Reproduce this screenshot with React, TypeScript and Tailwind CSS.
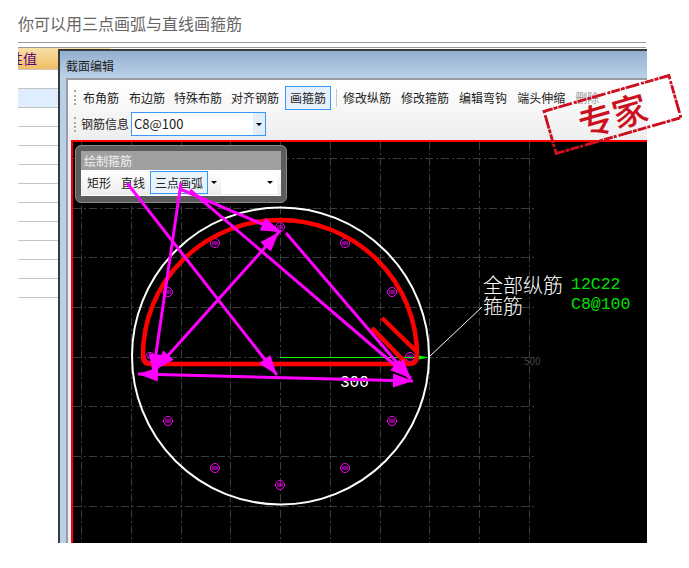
const GRID_X = [81, 131, 181, 230, 280, 330, 380, 429, 479, 529]
const GRID_Y = [158, 208, 257, 307, 357, 406, 456, 506]
const REBARS = [
  [280, 227], [215, 243], [345, 243], [168, 292], [392, 292], [150, 357],
  [410, 357], [168, 421], [392, 421], [215, 468], [345, 468], [280, 485],
]
const ROWS = Array.from({ length: 12 }, (_, i) => i)
const TOOLS = ["布角筋", "布边筋", "特殊布筋", "对齐钢筋"]
const TOOLS_RIGHT = ["修改纵筋", "修改箍筋", "编辑弯钩", "端头伸缩"]

function Arrow({ x1, y1, x2, y2, both }: { x1: number; y1: number; x2: number; y2: number; both?: boolean }) {
  const head = (fx: number, fy: number, tx: number, ty: number) => {
    const a = Math.atan2(ty - fy, tx - fx)
    const bx = tx - 20 * Math.cos(a)
    const by = ty - 20 * Math.sin(a)
    const nx = 7 * Math.sin(a)
    const ny = 7 * Math.cos(a)
    return `${tx},${ty} ${bx + nx},${by - ny} ${bx - nx},${by + ny}`
  }
  return (
    <g fill="#ff00ff">
      <line x1={x1} y1={y1} x2={x2} y2={y2} stroke="#ff00ff" strokeWidth="3" />
      <polygon points={head(x1, y1, x2, y2)} />
      {both && <polygon points={head(x2, y2, x1, y1)} />}
    </g>
  )
}

function Caret() {
  return <span className="block w-0 h-0 border-x-[3px] border-x-transparent border-t-[3px] border-t-black" />
}

function Grip() {
  return <span className="w-[2px] h-[15px] border-l-2 border-dotted border-[#a8a8a8]" />
}

function Drawing() {
  return (
    // viewBox is in page pixels, the canvas starts at x=73 y=142
    <svg className="block w-[574px] h-[401px]" viewBox="73 142 574 401">
      <g stroke="#3c3c3c" strokeWidth="1" strokeDasharray="8 3 2 3" shapeRendering="crispEdges">
        {GRID_X.map((x) => (
          <line key={x} x1={x + 0.5} y1="142" x2={x + 0.5} y2="543" />
        ))}
        {GRID_Y.map((y) => (
          <line key={y} x1="73" y1={y + 0.5} x2="537" y2={y + 0.5} />
        ))}
      </g>
      <circle cx="280.5" cy="356" r="148.5" fill="none" stroke="#fff" strokeWidth="2" />
      <g fill="none" stroke="#ff00ff" strokeWidth="1">
        {REBARS.map(([x, y]) => (
          <g key={`${x}-${y}`}>
            <circle cx={x} cy={y} r="4.5" />
            <line x1={x - 3} y1={y - 1} x2={x + 3} y2={y - 1} />
            <line x1={x - 3} y1={y + 1} x2={x + 3} y2={y + 1} />
          </g>
        ))}
      </g>
      <line x1="280" y1="357.5" x2="425" y2="357.5" stroke="#00ff00" strokeWidth="1" />
      <polygon points="429,357.5 416,355 416,360" fill="#00ff00" />
      <line x1="429" y1="357" x2="482" y2="307" stroke="#fff" strokeWidth="1" />
      <g fill="none" stroke="#ff0000" strokeWidth="4.5">
        <path d="M150 364 H409 Q417 364 417 355 A137 135 0 0 0 143 355 Q143 364 150 364 Z" />
        <line x1="382" y1="318" x2="416" y2="351" />
        <line x1="372" y1="328" x2="406" y2="363" />
      </g>
    </svg>
  )
}

// the annotation arrows were drawn on top of the whole screenshot, panel included
function Annotations() {
  return (
    <svg className="absolute left-0 top-0 w-[574px] h-[401px] pointer-events-none" viewBox="73 142 574 401">
      <Arrow x1={127} y1={183} x2={277} y2={375} />
      <Arrow x1={181} y1={183} x2={153} y2={374} />
      <Arrow x1={180} y1={189} x2={281} y2={232} />
      <Arrow x1={190} y1={190} x2={410} y2={378} />
      <Arrow x1={155} y1={370} x2={279} y2={232} both />
      <Arrow x1={286} y1={233} x2={411} y2={379} />
      <Arrow x1={138} y1={374} x2={413} y2={381} both />
    </svg>
  )
}

export default function App() {
  return (
    <div className="relative w-[689px] h-[568px] overflow-hidden bg-white font-['Noto_Sans_CJK_SC',sans-serif]">
      <h1 className="h-[42px] pl-[18px] pt-[11px] text-[16px] leading-[24px] font-normal text-[#666666]">
        你可以用三点画弧与直线画箍筋
      </h1>
      <div className="ml-[18px] w-[628px] h-[6px] border-y border-[#999aa0]" />

      <div className="flex pl-[18px]">
        {/* table behind the window */}
        <div className="w-[93px] shrink-0 overflow-hidden">
          <div className="h-[22px] bg-gradient-to-b from-[#f9dfa8] to-[#efbd62] border-b border-[#c9c9c9] text-[14px] leading-[21px] text-[#5c0a78] whitespace-nowrap -indent-[9px]">
            性值
          </div>
          {ROWS.map((r) => (
            <div key={r} className={`h-[19px] border-b border-[#c4c4c4] ${r === 1 ? "bg-[#dfeeff]" : "bg-white"}`} />
          ))}
        </div>

        {/* window */}
        <div className="relative -ml-[53px] mt-[1px] w-[589px] h-[494px] flex flex-col bg-[#b8cfe8] border-l-2 border-t-2 border-[#3a3a3a] text-[12px] text-[#222222]">
          <div className="h-[27px] pl-[6px] pt-[5px] leading-[20px] bg-gradient-to-b from-[#93afcf] to-[#bdd2ea]">截面编辑</div>
          <div className="flex-1 flex flex-col ml-[6px] min-h-0 border-l-2 border-t-2 border-[#9b9ca3] bg-[#f2f2f2]">
            <div className="pl-[3px] pt-[4px] h-[60px] shrink-0 bg-gradient-to-b from-white to-[#eeeeee]">
              <div className="flex items-center h-[27px] pl-[3px] gap-[10px] whitespace-nowrap">
                <Grip />
                {TOOLS.map((t, i) => (
                  <span key={t} className={i === 0 ? "-ml-[3px]" : i === 1 ? "-ml-[0px]" : "-ml-[1px]"}>{t}</span>
                ))}
                <span className="-ml-[4px] h-[24px] px-[4px] leading-[22px] border border-[#3399ff] bg-[#e6f1fb]">画箍筋</span>
                <span className="w-px h-[18px] bg-[#c8c8c8] -ml-[5px]" />
                {TOOLS_RIGHT.map((t) => (
                  <span key={t} className="-ml-[4px] mr-[4px]">{t}</span>
                ))}
                <span className="-ml-[4px] text-[#9a9a9a]">删除</span>
              </div>
              <div className="flex items-center h-[26px] pl-[3px] whitespace-nowrap">
                <Grip />
                <span className="ml-[5px]">钢筋信息</span>
                <div className="ml-[2px] flex items-center w-[135px] h-[24px] border border-[#3399ff] bg-white">
                  <span className="flex-1 pl-[2px] text-[13px]">C8@100</span>
                  <span className="w-[12px] h-[22px] flex items-center justify-center bg-[#e3edf8]"><Caret /></span>
                </div>
              </div>
            </div>

            {/* canvas */}
            <div className="relative flex-1 min-h-0 ml-[3px] bg-black border-l-2 border-t-2 border-[#ff0000] overflow-hidden">
              <Drawing />
              <div className="absolute left-[410px] top-[132px] text-[20px] leading-[21px] font-light text-white whitespace-nowrap">
                全部纵筋<br />箍筋
              </div>
              <div className="absolute left-[498px] top-[133px] text-[16.5px] leading-[20px] text-[#00e000] whitespace-nowrap font-['Liberation_Mono',monospace]">
                12C22<br />C8@100
              </div>
              <span className="absolute left-[267px] top-[232px] text-[16px] leading-[18px] text-white font-['Liberation_Mono',monospace]">300</span>
              <span className="absolute left-[451px] top-[213px] text-[10px] leading-[12px] text-[#444444]">500</span>

              {/* floating panel */}
              <div className="absolute left-[2px] top-[3px] w-[212px] h-[58px] rounded-[6px] bg-[#5c5c5c] border border-[#8a8a8a] p-[5px]">
                <div className="h-[19px] pl-[3px] leading-[19px] bg-[#a0a0a0] text-[#f0f0f0]">绘制箍筋</div>
                <div className="flex items-center h-[26px] bg-gradient-to-b from-white to-[#ececec] border-b border-white whitespace-nowrap">
                  <span className="ml-[6px]">矩形</span>
                  <span className="ml-[10px]">直线</span>
                  <span className="ml-[5px] h-[23px] w-[58px] text-center leading-[21px] border border-[#3399ff] bg-[#e9f3fc]">三点画弧</span>
                  <span className="ml-[3px]"><Caret /></span>
                  <span className="ml-[4px] flex items-center justify-end w-[56px] h-[22px] pr-[4px] bg-white"><Caret /></span>
                </div>
              </div>
              <Annotations />
            </div>
          </div>
        </div>
      </div>

      {/* stamp */}
      <div className="absolute left-[546px] top-[91px] w-[133px] h-[47px] -rotate-[16deg] text-center text-[35px] leading-[46px] font-medium text-[#cc1020]">
        <svg className="absolute inset-0 w-full h-full" viewBox="0 0 133 47" fill="none">
          <rect x="1.5" y="1.5" width="130" height="44" stroke="#cc1020" strokeWidth="3" strokeDasharray="9 1 4 1 14 2 3 1" />
        </svg>
        专家
      </div>
    </div>
  )
}
